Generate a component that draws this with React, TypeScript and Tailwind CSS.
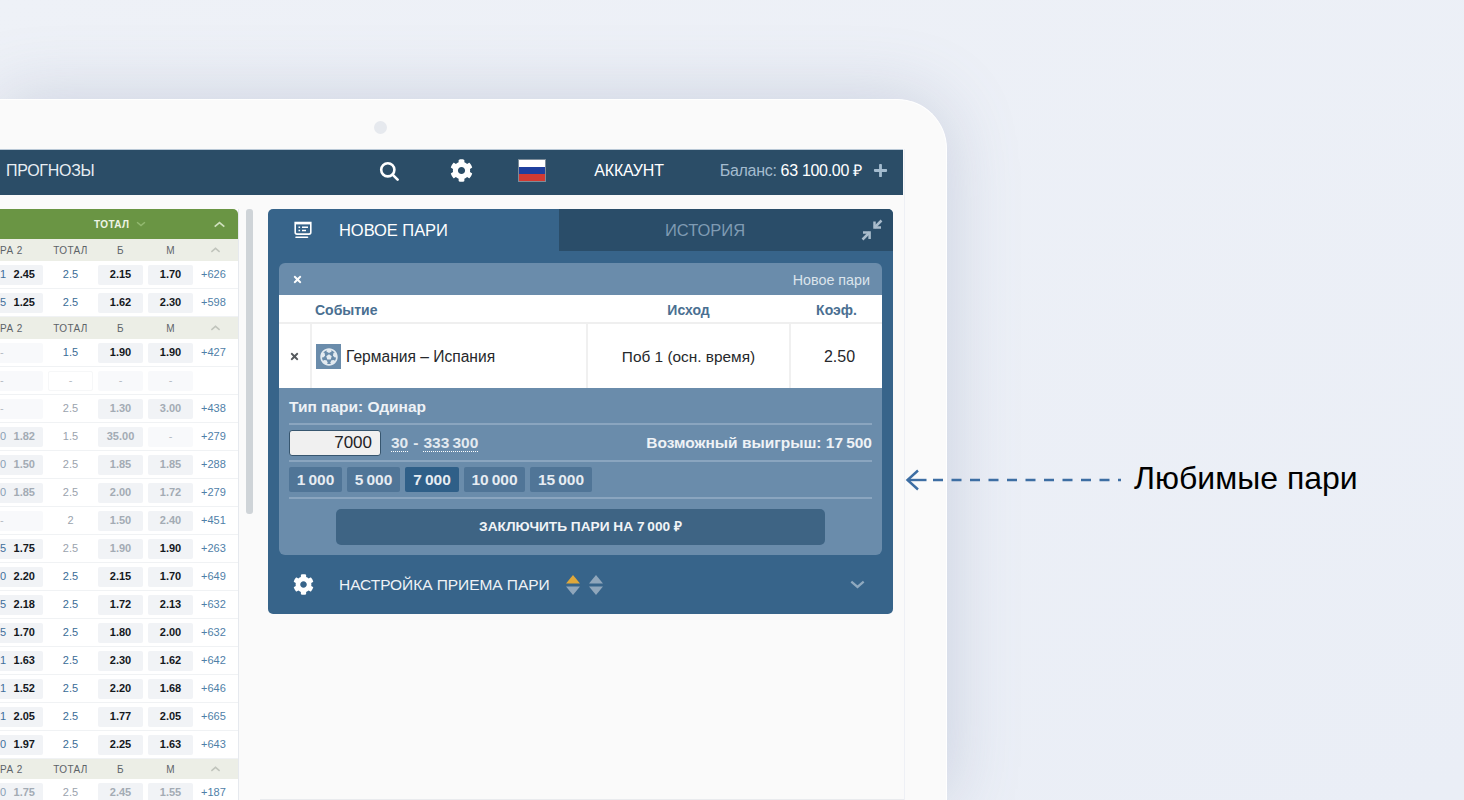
import React from 'react';
import { FaCog, FaFutbol, FaPlus, FaTimes } from 'react-icons/fa';

type Row = {
  left: string;
  value?: string;
  total: string;
  over: string;
  under: string;
  count?: string;
  // which cells are dimmed (suspended odds)
  dimValue?: boolean;
  dimTotal?: boolean;
  dimOver?: boolean;
  dimUnder?: boolean;
  empty?: boolean;
};

const blockA: Row[] = [
  { left: '1', value: '2.45', total: '2.5', over: '2.15', under: '1.70', count: '+626' },
  { left: '5', value: '1.25', total: '2.5', over: '1.62', under: '2.30', count: '+598' },
];

const blockB: Row[] = [
  { left: '-', total: '1.5', over: '1.90', under: '1.90', count: '+427' },
  { left: '-', total: '-', over: '-', under: '-', empty: true },
  { left: '-', total: '2.5', dimTotal: true, over: '1.30', dimOver: true, under: '3.00', dimUnder: true, count: '+438' },
  { left: '0', value: '1.82', dimValue: true, total: '1.5', dimTotal: true, over: '35.00', dimOver: true, under: '-', dimUnder: true, count: '+279' },
  { left: '0', value: '1.50', dimValue: true, total: '2.5', dimTotal: true, over: '1.85', dimOver: true, under: '1.85', dimUnder: true, count: '+288' },
  { left: '0', value: '1.85', dimValue: true, total: '2.5', dimTotal: true, over: '2.00', dimOver: true, under: '1.72', dimUnder: true, count: '+279' },
  { left: '-', total: '2', dimTotal: true, over: '1.50', dimOver: true, under: '2.40', dimUnder: true, count: '+451' },
  { left: '5', value: '1.75', total: '2.5', dimTotal: true, over: '1.90', dimOver: true, under: '1.90', count: '+263' },
  { left: '0', value: '2.20', total: '2.5', over: '2.15', under: '1.70', count: '+649' },
  { left: '5', value: '2.18', total: '2.5', over: '1.72', under: '2.13', count: '+632' },
  { left: '5', value: '1.70', total: '2.5', over: '1.80', under: '2.00', count: '+632' },
  { left: '1', value: '1.63', total: '2.5', over: '2.30', under: '1.62', count: '+642' },
  { left: '1', value: '1.52', total: '2.5', over: '2.20', under: '1.68', count: '+646' },
  { left: '1', value: '2.05', total: '2.5', over: '1.77', under: '2.05', count: '+665' },
  { left: '0', value: '1.97', total: '2.5', over: '2.25', under: '1.63', count: '+643' },
];

const blockC: Row[] = [
  { left: '0', value: '1.75', dimValue: true, total: '2.5', dimTotal: true, over: '2.45', dimOver: true, under: '1.55', dimUnder: true, count: '+187' },
];

const Chevron = ({ dir, className }: { dir: 'up' | 'down'; className: string }) => (
  <svg viewBox="0 0 14 8" className={className} fill="none" stroke="currentColor" strokeWidth="2">
    <path d={dir === 'up' ? 'M1.5 6.5 7 1.8l5.5 4.7' : 'M1.5 1.5 7 6.2l5.5-4.7'} />
  </svg>
);

const Odd = ({ text, dim }: { text: string; dim?: boolean }) => {
  const blank = text === '-';
  return (
    <div
      className={`flex h-[20px] items-center justify-center rounded-[2px] text-[11px] ${
        blank ? 'bg-[#f8f9fb] text-[#b4bac2]' : dim ? 'bg-[#f1f3f6] font-bold text-[#a3abb4]' : 'bg-[#f1f3f6] font-bold text-[#14181d]'
      }`}
    >
      {text}
    </div>
  );
};

const SubHeader = ({ h = 'h-[22px]' }: { h?: string }) => (
  <div className={`grid ${h} grid-cols-[43px_45px_45px_45px_1fr] items-center gap-x-[5px] bg-[#eceee6] text-[10px] tracking-[0.4px] text-[#5d6368]`}>
    <div className="whitespace-nowrap">РА 2</div>
    <div className="text-center">ТОТАЛ</div>
    <div className="text-center">Б</div>
    <div className="text-center">М</div>
    <div className="-ml-[5px] flex justify-center">
      <Chevron dir="up" className="h-[6px] w-[11px] text-[#c0c4bc]" />
    </div>
  </div>
);

const OddsRow = ({ row }: { row: Row }) => {
  const first = row.left === '-';
  return (
    <div className="grid h-[28px] grid-cols-[43px_45px_45px_45px_1fr] items-center gap-x-[5px] border-b border-[#f0f2f4]">
      <div
        className={`flex h-[20px] items-center justify-between rounded-r-[2px] pr-[8px] text-[11px] ${
          first ? 'bg-[#f8f9fb] text-[#b4bac2]' : 'bg-[#f1f3f6]'
        }`}
      >
        <span className={first ? '' : row.dimValue ? 'text-[#8aa0b5]' : 'font-medium text-[#3f6f9b]'}>{row.left}</span>
        {row.value && <span className={row.dimValue ? 'font-bold text-[#a3abb4]' : 'font-bold text-[#14181d]'}>{row.value}</span>}
      </div>
      {row.empty ? (
        <div className="flex h-[20px] items-center justify-center rounded-[2px] border border-[#f6f7f8] text-[11px] text-[#b4bac2]">-</div>
      ) : (
        <div className={`text-center text-[11px] ${row.dimTotal ? 'text-[#9aa3ad]' : 'text-[#3a6c96]'}`}>{row.total}</div>
      )}
      <Odd text={row.over} dim={row.dimOver} />
      <Odd text={row.under} dim={row.dimUnder} />
      <div className="pl-[3px] text-[11px] text-[#4f80a8]">{row.count}</div>
    </div>
  );
};

const BetIcon = () => (
  <svg viewBox="0 0 18 18" className="h-[18px] w-[18px]" fill="none" stroke="white" strokeWidth="1.6">
    <path d="M1.2 1.5h15.6v9.8a1.8 1.8 0 0 1-1.8 1.8H3a1.8 1.8 0 0 1-1.8-1.8z" />
    <path d="M1 2.2h16" strokeWidth="2.4" />
    <path d="M2 16.2h11.5" strokeLinecap="round" />
    <path d="M4.5 6.2h1.6M8 6.2h6M4.5 9.4h1.6M8 9.4h4" strokeWidth="1.5" />
  </svg>
);

const CollapseIcon = () => (
  <svg viewBox="0 0 22 22" className="h-[22px] w-[22px]" fill="none" stroke="#a9bccc" strokeWidth="2.5">
    <path d="M20.5 1.5 13.5 8.5" />
    <path d="M13.5 2.5V8.6H20" />
    <path d="M1.5 20.5 8.5 13.5" />
    <path d="M2 13.4H8.6V20" />
  </svg>
);

const SortCaret = ({ upColor, downColor }: { upColor: string; downColor: string }) => (
  <svg viewBox="0 0 14 20" className="h-[20px] w-[14px]">
    <path d="M7 0 14 8.5H0z" fill={upColor} />
    <path d="M7 20 14 11.5H0z" fill={downColor} />
  </svg>
);

const chips = [
  { label: '1\u2009000', w: 'w-[53px]' },
  { label: '5\u2009000', w: 'w-[53px]' },
  { label: '7\u2009000', w: 'w-[54px]', active: true },
  { label: '10\u2009000', w: 'w-[61px]' },
  { label: '15\u2009000', w: 'w-[62px]' },
];

export default function App() {
  return (
    <div className="relative h-[800px] w-[1464px] overflow-hidden bg-gradient-to-br from-[#eef1f7] to-[#eaeef6] font-['Liberation_Sans',Arial,sans-serif]">
      {/* device */}
      <div className="mt-[99px] h-[701px] w-[947px] rounded-tr-[50px] border-t border-r border-white bg-[#fafafa] pr-[41px] shadow-[0_0_70px_rgba(110,125,160,0.28)]">
        <div className="h-[49px] pt-[21px] pl-[374px]">
          <div className="h-[13px] w-[13px] rounded-full bg-[#e6e9ee]" />
        </div>

        <div className="flex h-[651px] flex-col border-r border-[#eef0f5]">
          {/* top bar */}
          <div className="mr-[1px] flex h-[46px] shrink-0 items-center border-t border-[#b9c8d6] bg-[#2b4d67] pb-[4px] text-white">
            <span className="ml-[6px] text-[16px] tracking-[-0.3px] text-[#e8eef3]">ПРОГНОЗЫ</span>
            <svg viewBox="0 0 20 20" className="ml-[285px] h-[20px] w-[20px]" fill="none" stroke="white" strokeWidth="2.6">
              <circle cx="8.8" cy="8.8" r="6.6" />
              <path d="m13.6 13.6 5 5" strokeLinecap="round" />
            </svg>
            <FaCog className="ml-[51px] text-[23px]" />
            <div className="ml-[45px] flex h-[23px] w-[28px] flex-col border border-[#7d8c99]">
              <div className="flex-1 bg-white" />
              <div className="flex-1 bg-[#1f3f9e]" />
              <div className="flex-1 bg-[#d23a32]" />
            </div>
            <span className="ml-[48px] text-[16px] tracking-[-0.2px]">АККАУНТ</span>
            <span className="ml-[56px] text-[16px] tracking-[-0.3px] text-[#a4bccf]">Баланс:</span>
            <span className="ml-[4px] text-[16px] tracking-[-0.3px] text-white">63 100.00 ₽</span>
            <FaPlus className="ml-[11px] text-[15px] text-[#a4bccf]" />
          </div>

          <div className="flex min-h-0 flex-1">
            {/* odds table */}
            <div className="h-full w-[239px] shrink-0 overflow-hidden pt-[14px]">
              <div className="h-full border-r border-[#e6e9ee] bg-white">
                <div className="flex h-[30px] items-center rounded-tr-[5px] bg-[#6a9544] text-[10px] font-bold tracking-[0.4px] text-[#eef4e6]">
                  <span className="ml-[94px]">ТОТАЛ</span>
                  <Chevron dir="down" className="ml-[7px] h-[6px] w-[10px] text-[#93b970]" />
                  <Chevron dir="up" className="ml-[67px] h-[7px] w-[13px] text-[#cfe0bd]" />
                </div>
                <SubHeader />
                {blockA.map((row, i) => (
                  <OddsRow key={i} row={row} />
                ))}
                <SubHeader />
                {blockB.map((row, i) => (
                  <OddsRow key={i} row={row} />
                ))}
                <SubHeader h="h-[20px]" />
                {blockC.map((row, i) => (
                  <OddsRow key={i} row={row} />
                ))}
              </div>
            </div>

            {/* scrollbar */}
            <div className="ml-[7px] w-[7px] shrink-0 pt-[14px]">
              <div className="h-[305px] rounded-[3px] bg-[#cfd4d8]" />
            </div>

            {/* bet slip */}
            <div className="ml-[7px] flex-1 border-b border-[#e9ebee] pt-[14px] pl-[8px]">
              <div className="h-[405px] w-[625px] rounded-[5px] bg-[#37648a]">
                <div className="flex h-[42px]">
                  <div className="flex w-[291px] items-center pl-[26px] text-white">
                    <BetIcon />
                    <span className="ml-[27px] text-[16.5px] tracking-[-0.05px]">НОВОЕ ПАРИ</span>
                  </div>
                  <div className="relative flex flex-1 items-center justify-center rounded-tr-[5px] bg-[#2a4d69] pr-[62px] pl-[20px] text-[16.5px] text-[#7f9bb3]">
                    ИСТОРИЯ
                    <div className="absolute top-[10px] right-[10px]">
                      <CollapseIcon />
                    </div>
                  </div>
                </div>

                <div className="mx-[11px] mt-[12px] h-[292px] overflow-hidden rounded-[6px] bg-[#6a8cab]">
                  <div className="flex h-[32px] items-center justify-between pr-[12px] pl-[13px]">
                    <FaTimes className="text-[11px] text-white" />
                    <span className="pt-[3px] text-[14.3px] text-[#dbe4ec]">Новое пари</span>
                  </div>

                  <div className="bg-white">
                    <div className="flex h-[29px] items-center border-b-2 border-[#efefef] pt-[3px] text-[14px] font-bold text-[#4a6f91]">
                      <div className="w-[33px]" />
                      <div className="w-[274px] pl-[3px]">Событие</div>
                      <div className="w-[205px] text-center">Исход</div>
                      <div className="flex-1 text-center">Коэф.</div>
                    </div>
                    <div className="flex h-[64px] items-center text-[15.6px] text-[#26282b]">
                      <div className="flex h-full w-[33px] items-center justify-center border-r-2 border-[#f0f0f0]">
                        <FaTimes className="text-[11px] text-[#55595d]" />
                      </div>
                      <div className="flex h-full w-[274px] items-center pt-[1px] pl-[4px]">
                        <div className="flex h-[25px] w-[25px] items-center justify-center bg-[#6a8cab]">
                          <FaFutbol className="text-[18px] text-[#e3eaf0]" />
                        </div>
                        <span className="ml-[5px]">Германия – Испания</span>
                      </div>
                      <div className="flex h-full w-[205px] items-center justify-center border-x-2 border-[#f0f0f0] pt-[1px] text-[15.4px]">
                        Поб 1 (осн. время)
                      </div>
                      <div className="flex-1 pt-[1px] pl-[6px] text-center text-[16px]">2.50</div>
                    </div>
                  </div>

                  <div className="px-[10px]">
                    <div className="flex h-[37px] items-center border-b-2 border-[#8aa5bf] pt-[2px] text-[15.5px] font-bold text-[#eef2f6]">
                      Тип пари: Одинар
                    </div>
                    <div className="flex h-[37px] items-center border-b-2 border-[#8aa5bf] pt-[1px]">
                      <div className="flex h-[26px] w-[92px] items-center justify-end rounded-[3px] border border-[#37566f] bg-[#f0f0f0] pr-[8px] text-[17px] text-[#1f2225]">
                        7000
                      </div>
                      <span className="ml-[10px] border-b border-dotted border-white text-[15.5px] leading-[17px] font-bold text-[#e3eaf0]">30</span>
                      <span className="mx-[5px] text-[15.5px] font-bold text-[#e3eaf0]">-</span>
                      <span className="border-b border-dotted border-white text-[15.5px] leading-[17px] font-bold text-[#e3eaf0]">{'333\u2009300'}</span>
                      <span className="ml-auto text-[15.5px] font-bold text-[#eef2f6]">{'Возможный выигрыш: 17\u2009500'}</span>
                    </div>
                    <div className="flex h-[37px] items-center gap-[5px] border-b-2 border-[#8aa5bf]">
                      {chips.map((chip) => (
                        <div
                          key={chip.label}
                          className={`flex h-[25px] ${chip.w} items-center justify-center rounded-[2px] text-[15.5px] font-bold text-[#e6ecf2] ${
                            chip.active ? 'bg-[#2f5f88]' : 'bg-[#507597]'
                          }`}
                        >
                          {chip.label}
                        </div>
                      ))}
                    </div>
                    <div className="mx-auto mt-[10px] flex h-[36px] w-[489px] items-center justify-center rounded-[5px] bg-[#3e6484] pt-[1px] text-[13.7px] font-bold text-[#f1f4f7]">
                      {'ЗАКЛЮЧИТЬ ПАРИ НА 7\u2009000 ₽'}
                    </div>
                  </div>
                </div>

                <div className="flex h-[59px] items-center pr-[27px] pl-[25px] text-white">
                  <FaCog className="text-[21px]" />
                  <span className="ml-[25px] text-[15.5px] tracking-[-0.05px] text-[#eef2f6]">НАСТРОЙКА ПРИЕМА ПАРИ</span>
                  <div className="ml-[16px]">
                    <SortCaret upColor="#e0a83a" downColor="#8fa6bb" />
                  </div>
                  <div className="ml-[9px]">
                    <SortCaret upColor="#8fa6bb" downColor="#8fa6bb" />
                  </div>
                  <Chevron dir="down" className="ml-auto h-[9px] w-[17px] text-[#8fa9bf]" />
                </div>
              </div>
            </div>
          </div>
        </div>
      </div>

      {/* callout */}
      <div className="absolute top-[461px] left-[905px] flex h-[38px] items-center">
        <svg viewBox="0 0 216 22" className="h-[22px] w-[216px]" fill="none" stroke="#3d6ea3" strokeWidth="2.4">
          <path d="M13 1.5 2.5 11 13 20.5" />
          <path d="M2.5 11h19" />
          <path d="M28 11h188" strokeDasharray="10 8.5" />
        </svg>
        <span className="mb-[5px] ml-[13px] text-[32px] text-black">Любимые пари</span>
      </div>
    </div>
  );
}
